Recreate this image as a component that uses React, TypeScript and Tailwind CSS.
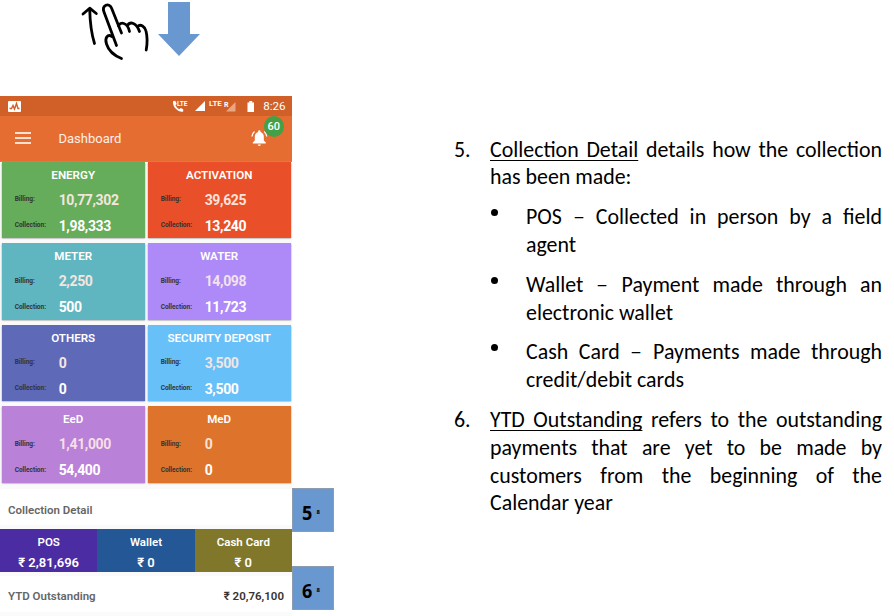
import React from "react";

type CardData = { title: string; billing: string; collection: string; color: string; soft: string };

const cards: CardData[] = [
  { title: "ENERGY", billing: "10,77,302", collection: "1,98,333", color: "bg-[#66ad5b]", soft: "text-[#f3e6df]" },
  { title: "ACTIVATION", billing: "39,625", collection: "13,240", color: "bg-[#e94f28]", soft: "text-[#fbe3da]" },
  { title: "METER", billing: "2,250", collection: "500", color: "bg-[#5fb5c0]", soft: "text-[#f3e6df]" },
  { title: "WATER", billing: "14,098", collection: "11,723", color: "bg-[#ad8af8]", soft: "text-[#f3e2ea]" },
  { title: "OTHERS", billing: "0", collection: "0", color: "bg-[#5e69b8]", soft: "text-[#f6e6e2]" },
  { title: "SECURITY DEPOSIT", billing: "3,500", collection: "3,500", color: "bg-[#68c0f9]", soft: "text-[#f0e6e4]" },
  { title: "EeD", billing: "1,41,000", collection: "54,400", color: "bg-[#b981d8]", soft: "text-[#f6dfe6]" },
  { title: "MeD", billing: "0", collection: "0", color: "bg-[#de732c]", soft: "text-[#fbe3d6]" },
];

function Card({ title, billing, collection, color, soft }: CardData) {
  return (
    <section className={`h-[76.500px] pt-[5px] text-white shadow-[0_0.5px_1.5px_rgba(0,0,0,0.5)] ${color}`}>
      <h2 className="h-4 text-center text-[11.600px] leading-[17px] font-semibold">{title}</h2>
      <div className="mt-2 flex h-[18px] items-center pl-[13px]">
        <span className="w-[44px] pt-px text-[6.500px] font-bold text-[#333]">Billing:</span>
        <span className={`text-[14px] font-bold tracking-[-0.35px] leading-[18px] ${soft}`}>{billing}</span>
      </div>
      <div className="mt-2 flex h-[18px] items-center pl-[13px]">
        <span className="w-[44px] pt-px text-[6.500px] font-bold text-[#333]">Collection:</span>
        <span className="text-[14px] font-bold tracking-[-0.35px] leading-[18px]">{collection}</span>
      </div>
    </section>
  );
}

function Gesture() {
  return (
    <div className="flex h-24 pl-[78px]">
      <svg width="76" height="64" viewBox="78 0 76 64" fill="none" stroke="#000" strokeWidth="2.8" strokeLinecap="round" strokeLinejoin="round">
        <path d="M94.5 43.5C91.5 34 90 23 89.7 9M83 14L89.7 8.2L96.3 13.5" />
        <path d="M116.500 45.500L104 12C101.5 5.500 109 2 111.500 8L121.500 33" />
        <path d="M118.500 26C120 21.500 127.500 22 129.500 31.500M127.500 25.500C130 21 136.500 22.500 139.500 31.500M137.500 26.500C140.500 23.500 145 26.500 146 31C147.500 37 147.300 44 146.200 50" />
        <path d="M112 36.500C107.500 33.500 104.500 38 106.500 44C109 52 114 55.500 121.500 58.500" />
      </svg>
      <svg className="ml-1" width="44" height="58" viewBox="158 0 44 58">
        <path d="M168 2H190V34H200L179 56L158 34H168Z" fill="#6997cf" />
      </svg>
    </div>
  );
}

function StatusBar() {
  return (
    <div className="flex h-5 items-center bg-[#d06028] pr-[6.500px] pl-2 text-white">
      <svg width="13" height="11" viewBox="0 0 13 11">
        <rect width="13" height="11" rx="1" fill="#fff" />
        <path d="M1.500 7.500H3.500L5 4.500L6.500 8L8.500 2.500L10 7.500H11.500" fill="none" stroke="#d06028" strokeWidth="1.400" />
      </svg>
      <svg className="ml-[151px]" width="16" height="14" viewBox="172 99 16 14">
        <path d="M173 101.200L175.300 100.800L176.700 104L175.400 105.300Q176.800 108.200 179.300 109.300L180.700 108L183.200 109.200V111.500Q179 112.500 175.800 108.800Q172.600 105.500 173 101.200Z" fill="#fff" />
        <text x="177" y="105.500" fontSize="7" fontWeight="700" fill="#fff" textLength="10.500" lengthAdjust="spacingAndGlyphs">LTE</text>
      </svg>
      <svg className="ml-[7px]" width="10" height="10" viewBox="0 0 10 10"><path d="M0 10L10 0V10Z" fill="#fff" /></svg>
      <span className="mb-1 ml-[4px] w-[14px] text-[8px] leading-none font-semibold">LTE</span>
      <svg className="ml-[1px]" width="12" height="12" viewBox="224 100 12 12">
        <path d="M226 111.500L235.500 102V111.500Z" fill="#e9a681" />
        <text x="224" y="107" fontSize="8" fontWeight="700" fill="#fff" textLength="4.500" lengthAdjust="spacingAndGlyphs">R</text>
      </svg>
      <svg className="ml-[11px]" width="8" height="11" viewBox="0 0 8 11">
        <path d="M0.500 1.500H2.300V0H5.200V1.500H7V11H0.500Z" fill="#fff" />
      </svg>
      <span className="ml-auto text-[11.600px] leading-5">8:26</span>
    </div>
  );
}

function AppBar() {
  return (
    <header className="relative flex h-[45.500px] items-center border-b border-[#b98570] bg-[#e66d31] pl-[15px] text-[#fff0e8]">
      <div className="flex w-4 flex-col gap-[3px]">
        <i className="h-[2px] bg-[#fbe0d2]" />
        <i className="h-[2px] bg-[#fbe0d2]" />
        <i className="h-[2px] bg-[#fbe0d2]" />
      </div>
      <h1 className="ml-[27.500px] pt-px text-[13px] leading-4 font-normal">Dashboard</h1>
      <svg className="absolute top-[13px] left-[251px]" width="17" height="18" viewBox="0 0 17 18" fill="#fff">
        <path d="M8.300 1.200A1.200 1.200 0 0 1 9.500 2.500V3.100Q12.700 4.200 12.800 7.500V11.500L14.800 13.500V14.500H1.800V13.500L3.800 11.500V7.500Q3.900 4.200 7.100 3.100V2.500A1.200 1.200 0 0 1 8.300 1.200ZM6.700 15.400H9.900Q9.500 17 8.300 17Q7.100 17 6.700 15.400Z" />
        <path d="M1 7.500Q1.200 4.200 3.500 2.500M15.700 7.500Q15.500 4.200 13.200 2.500" stroke="#fff" strokeWidth="1.300" fill="none" />
      </svg>
      <span className="absolute top-0 left-[263.500px] flex size-[20.500px] items-center justify-center rounded-full bg-[#43a047] pt-px text-[11px] font-medium text-white">60</span>
    </header>
  );
}

function Method({ name, value, color }: { name: string; value: string; color: string }) {
  return (
    <div className={`flex-1 pt-[3px] text-center font-semibold text-white ${color}`}>
      <div className="text-[11.500px] leading-5">{name}</div>
      <div className="text-[13px] leading-[21px]">{value}</div>
    </div>
  );
}

function Marker({ n }: { n: string }) {
  return (
    <div className="flex h-[44px] w-[42px] items-center border border-[#8b9bb0] bg-[#6997cf] pt-[5px] pl-[9px] font-['Noto_Sans',sans-serif] font-bold text-black">
      <span className="w-[14.500px] origin-left scale-x-90 text-[20px]">{n}</span>
      <span className="text-[6px]">8</span>
    </div>
  );
}

function Line({ children, full = false }: { children: React.ReactNode; full?: boolean }) {
  return <div className={`whitespace-nowrap ${full ? "[text-align-last:justify]" : ""}`}>{children}</div>;
}

function Dash() {
  return <span className="inline-block w-[12px] origin-left scale-x-[1.1]">–</span>;
}

function Bullet({ children }: { children: React.ReactNode }) {
  return (
    <li className="mt-[12px] flex">
      <span className="w-9 shrink-0 pt-[6px] pl-[1px]"><i className="block size-[7px] rounded-full bg-black" /></span>
      <div className="flex-1">{children}</div>
    </li>
  );
}

function Notes() {
  return (
    <ol className="mt-[135.700px] ml-[120px] w-[428px] font-['Carlito','Lato',sans-serif] text-[21.900px] leading-[27.800px] text-black">
      <li className="flex">
        <span className="w-9 shrink-0">5.</span>
        <div className="flex-1">
          <Line full><u className="decoration-1 underline-offset-[3px] [text-decoration-skip-ink:none]">Collection Detail</u> details how the collection</Line>
          <Line>has been made:</Line>
          <ul>
            <Bullet><Line full>POS <Dash /> Collected in person by a field</Line><Line>agent</Line></Bullet>
            <Bullet><Line full>Wallet <Dash /> Payment made through an</Line><Line>electronic wallet</Line></Bullet>
            <Bullet><Line full>Cash Card <Dash /> Payments made through</Line><Line>credit/debit cards</Line></Bullet>
          </ul>
        </div>
      </li>
      <li className="mt-[12px] flex">
        <span className="w-9 shrink-0">6.</span>
        <div className="flex-1">
          <Line full><u className="decoration-1 underline-offset-[3px] [text-decoration-skip-ink:none]">YTD Outstanding</u> refers to the outstanding</Line>
          <Line full>payments that are yet to be made by</Line>
          <Line full>customers from the beginning of the</Line>
          <Line>Calendar year</Line>
        </div>
      </li>
    </ol>
  );
}

export default function App() {
  return (
    <main className="flex h-[616px] w-[894px] overflow-hidden bg-white font-['Roboto',sans-serif]">
      <div className="w-[334px]">
        <Gesture />
        <div className="flex">
          <div className="h-[520px] w-[292px] bg-[#fafafa]">
            <StatusBar />
            <AppBar />
            <div className="grid grid-cols-2 gap-x-[3px] gap-y-[5.100px] pr-[1.300px] pl-[1.700px]">
              {cards.map((card) => <Card key={card.title} {...card} />)}
            </div>
            <h2 className="mt-[6.200px] h-9 bg-white pt-[3px] pl-2 text-[11.500px] leading-9 font-semibold text-[#666]">Collection Detail</h2>
            <div className="mt-[4px] flex h-[43px]">
              <Method name="POS" value="₹ 2,81,696" color="bg-[#4b2ca3]" />
              <Method name="Wallet" value="₹ 0" color="bg-[#235796]" />
              <Method name="Cash Card" value="₹ 0" color="bg-[#80772b]" />
            </div>
            <div className="mt-[4px] flex h-9 items-center justify-between bg-white pt-[6px] pr-[8px] pl-2 text-[11.500px] font-semibold">
              <span className="text-[#666]">YTD Outstanding</span>
              <span className="text-[#333]">₹ 20,76,100</span>
            </div>
          </div>
          <div className="flex flex-col gap-[34px] pt-[392px]">
            <Marker n="5" />
            <Marker n="6" />
          </div>
        </div>
      </div>
      <Notes />
    </main>
  );
}
